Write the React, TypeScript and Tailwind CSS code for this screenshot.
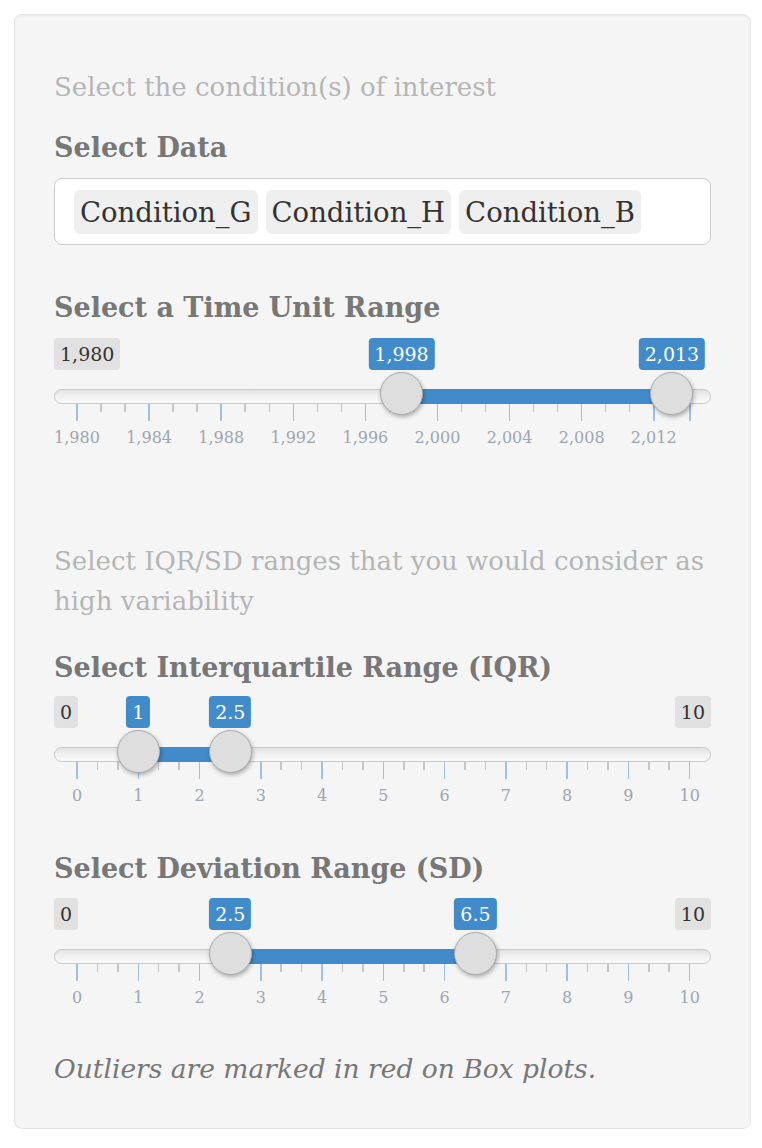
import React from "react";

type TickKind = "major" | "minor" | null;

interface RangeSliderProps {
    min: number;
    max: number;
    from: number;
    to: number;
    positions: number;
    kindAt: (i: number) => TickKind;
    labelAt: (i: number) => string | undefined;
    showMax?: boolean;
}

const PAD_L = 23;
const USABLE = 613;

function fmt(v: number) {
    return v.toLocaleString("en-US");
}

/**
 * ion.rangeSlider look-alike (shiny skin), drawn at 2x
 */
function RangeSlider({ min, max, from, to, positions, kindAt, labelAt, showMax = true }: RangeSliderProps) {
    const px = (v: number) => PAD_L + ((v - min) / (max - min)) * USABLE;
    const x1 = px(from);
    const x2 = px(to);

    return (
        <div className="relative h-[112px] w-full">
            <div className="flex h-[32px] justify-between text-[19px] leading-[32px] text-[#333]">
                <span className="rounded-[4px] bg-[#e1e1e1] px-[6px]">{fmt(min)}</span>
                {showMax && <span className="rounded-[4px] bg-[#e1e1e1] px-[6px]">{fmt(max)}</span>}
            </div>

            {[from, to].map((v, i) => (
                <span
                    key={i}
                    className="absolute top-0 h-[32px] -translate-x-1/2 whitespace-nowrap rounded-[4px] bg-[#428bca] px-[6px] text-[19px] leading-[32px] text-white"
                    style={{ left: px(v) }}
                >
                    {fmt(v)}
                </span>
            ))}

            <div className="relative mt-[19px] h-[15px] rounded-full border border-[#c9c9c9] bg-gradient-to-b from-[#e2e2e2] via-[#f1f1f1] to-[#fafafa]">
                <div
                    className="absolute -top-px -bottom-px bg-[#428bca]"
                    style={{ left: x1 - 1, width: x2 - x1 }}
                />
            </div>

            <div className="flex justify-between pl-[23px] pr-[21px]">
                {Array.from({ length: positions }, (_, i) => {
                    const kind = kindAt(i);
                    const label = labelAt(i);
                    return (
                        <div key={i} className="flex w-0 flex-col items-center">
                            <div className="flex h-[17px] w-[1.5px] shrink-0 flex-col">
                                {kind === "major" && <div className="h-[17px] bg-[#9dc1e3]" />}
                                {kind === "minor" && <div className="h-[8px] bg-[#c6c6c6]" />}
                            </div>
                            {label && (
                                <span className="mt-[7px] whitespace-nowrap text-[16px] leading-[20px] text-[#9ea6b0]">
                                    {label}
                                </span>
                            )}
                        </div>
                    );
                })}
            </div>

            {[x1, x2].map((x, i) => (
                <div
                    key={"h" + i}
                    className="absolute top-[34px] h-[43px] w-[43px] rounded-full border-[1.5px] border-[#ababab] bg-[#dedede] shadow-[1px_2px_4px_rgba(0,0,0,0.3)]"
                    style={{ left: x - 21.5 }}
                />
            ))}
        </div>
    );
}

// years: a position every 2/3 year, 1980..2014
const yearKind = (i: number): TickKind => (i === 51 || i % 6 === 0 ? "major" : i % 2 === 0 ? "minor" : null);
const yearLabel = (i: number) => (i % 6 === 0 && i < 51 ? fmt(1980 + (i / 6) * 4) : undefined);

// 0..10: a position every 1/3
const tenKind = (i: number): TickKind => (i % 3 === 0 ? "major" : "minor");
const tenLabel = (i: number) => (i % 3 === 0 ? String(i / 3) : undefined);

export default function App() {
    return (
        <div className="min-h-[1148px] bg-white pl-[14px] pt-[14px] font-['DejaVu_Serif',serif] text-[26px] leading-[40px]">
            <div className="w-[737px] rounded-[8px] border border-[#e3e3e3] bg-[#f5f5f5] px-[39px] pt-[52px] pb-[39px] shadow-[inset_0_1px_2px_rgba(0,0,0,0.05)]">
                <p className="text-[#b5b5b5]">Select the condition(s) of interest</p>

                <h4 className="mt-[21px] text-[27px] font-bold text-[#777]">Select Data</h4>
                <div className="mt-[10px] flex h-[67px] items-start gap-[8px] rounded-[8px] border border-[#cccccc] bg-white pl-[19px] pt-[11px]">
                    {["Condition_G", "Condition_H", "Condition_B"].map((c) => (
                        <span
                            key={c}
                            className="h-[44px] rounded-[6px] bg-[#efefef] px-[6px] text-[27.5px] leading-[44px] text-[#333]"
                        >
                            {c}
                        </span>
                    ))}
                </div>

                <h4 className="mt-[43px] text-[27px] font-bold text-[#777]">Select a Time Unit Range</h4>
                <div className="mt-[10px]">
                    <RangeSlider
                        min={1980}
                        max={2014}
                        from={1998}
                        to={2013}
                        positions={52}
                        kindAt={yearKind}
                        labelAt={yearLabel}
                        showMax={false}
                    />
                </div>

                <p className="mt-[91px] text-[#b5b5b5]">
                    Select IQR/SD ranges that you would consider as
                    <br />
                    high variability
                </p>

                <h4 className="mt-[27px] text-[27px] font-bold text-[#777]">Select Interquartile Range (IQR)</h4>
                <div className="mt-[8px]">
                    <RangeSlider min={0} max={10} from={1} to={2.5} positions={31} kindAt={tenKind} labelAt={tenLabel} />
                </div>

                <h4 className="mt-[41px] text-[27px] font-bold text-[#777]">Select Deviation Range (SD)</h4>
                <div className="mt-[9px]">
                    <RangeSlider min={0} max={10} from={2.5} to={6.5} positions={31} kindAt={tenKind} labelAt={tenLabel} />
                </div>

                <p className="mt-[39px] text-[26.5px] italic text-[#777]">Outliers are marked in red on Box plots.</p>
            </div>
        </div>
    );
}
